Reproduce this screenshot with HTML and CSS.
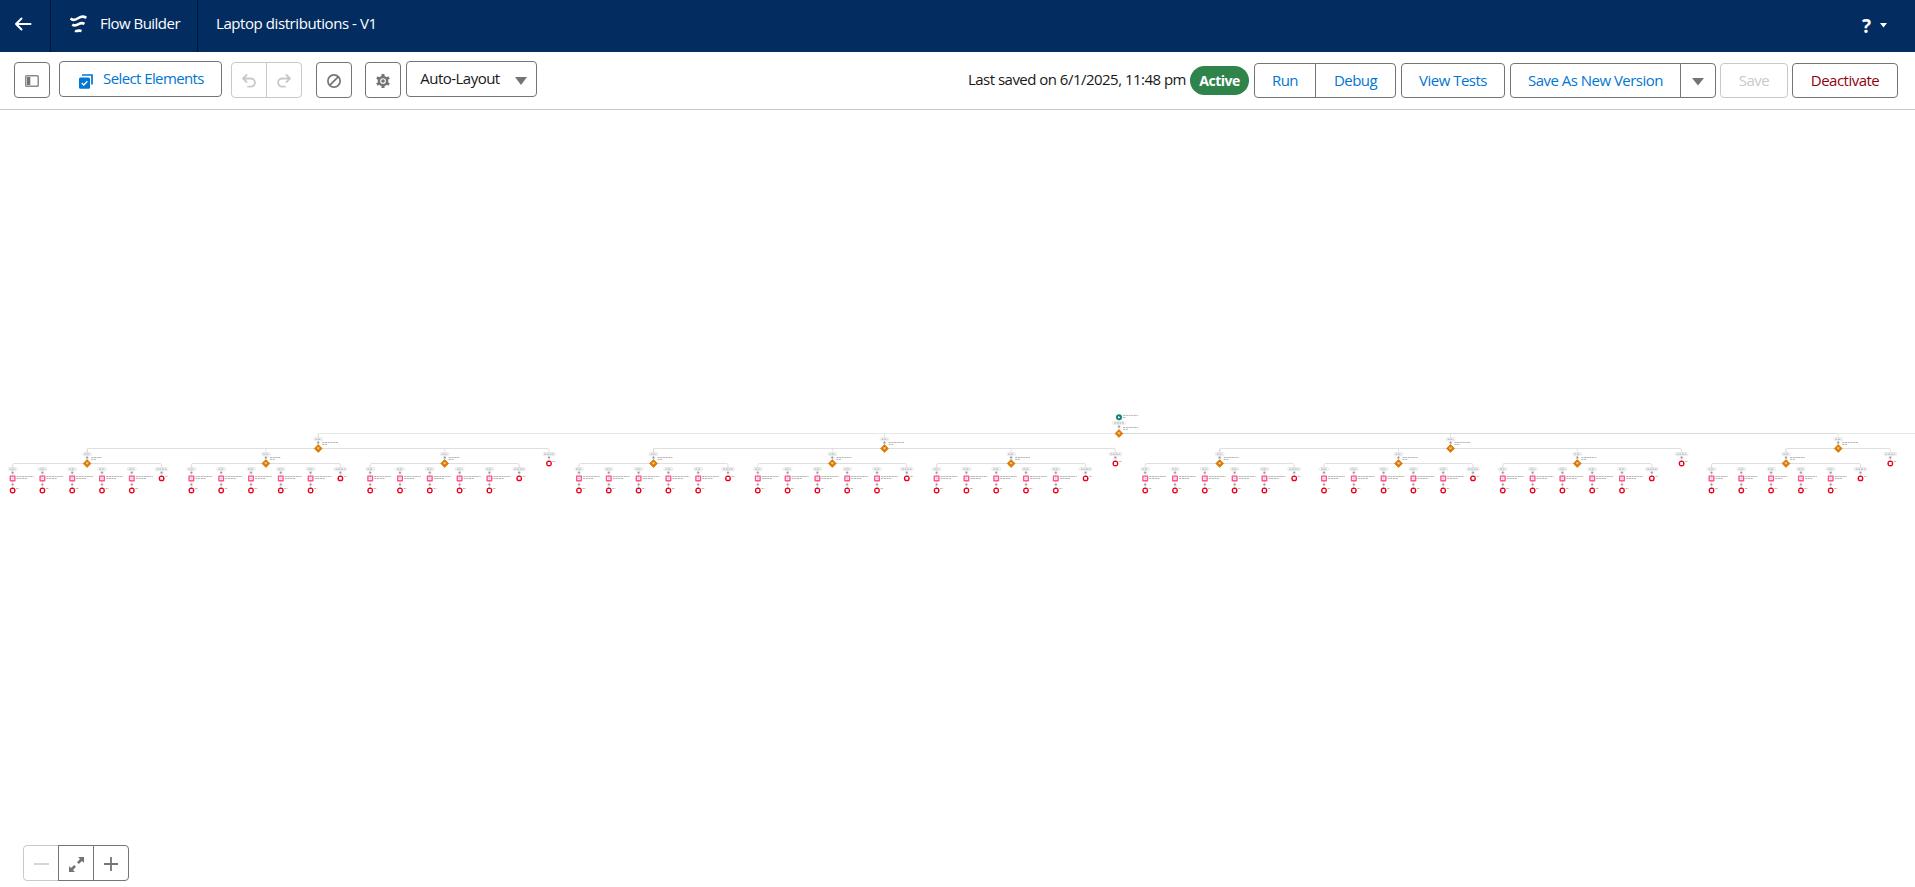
FILE: index.html
```html
<!DOCTYPE html>
<html lang="en">
<head>
<meta charset="utf-8">
<title>Flow Builder</title>
<link rel="stylesheet" href="styles.css">
</head>
<body>
<header class="topbar">
  <a class="back"><svg width="18" height="14" viewBox="0 0 18 14"><path d="M16.500 7H2M7.500 1.500L2 7l5.500 5.500" fill="none" stroke="#fff" stroke-width="2" stroke-linecap="round" stroke-linejoin="round"/></svg></a>
  <div class="brand">
    <svg width="17" height="18" viewBox="0 0 17 18"><g fill="none" stroke="#fff" stroke-width="2.600"><path d="M.5 3.500C3 6.200 5.500 5 8.500 3S13.500 1 16.300 2.800"/><path d="M2.300 9.500c2.500 2 4.500 .7 6.500-.5s3.700-1.300 5.700-.2"/><path d="M5 15.800c2 1 3-.9 6.500 .1"/></g></svg>
    <span>Flow Builder</span>
  </div>
  <h1 class="title">Laptop distributions - V1</h1>
  <div class="help"><b>?</b><svg width="7" height="5"><path d="M0 0h7L3.500 4.500z" fill="#fff"/></svg></div>
</header>
<div class="toolbar">
  <button class="btn icon toggle"><svg width="14" height="12" viewBox="0 0 14 12"><rect x=".75" y=".75" width="12.500" height="10.500" rx=".8" fill="none" stroke="#8c8c8c" stroke-width="1.500"/><path d="M2 2h3.300v8H2z" fill="#747474"/></svg></button>
  <button class="btn select"><svg width="14" height="15" viewBox="0 0 14 15"><path d="M3 1h10v9.500" fill="none" stroke="#0176d3" stroke-width="1.700"/><rect x="0" y="3.500" width="11" height="11.200" rx="1.500" fill="#0176d3"/><path d="M2.700 9l2 2 3.700-3.800" fill="none" stroke="#fff" stroke-width="1.300"/></svg><span>Select Elements</span></button>
  <div class="group undo">
    <button class="btn icon off"><svg width="14" height="14" viewBox="0 0 14 14"><path d="M4.500 1L1 4.500 4.500 8M1.500 4.500h7.300a4 4 0 0 1 0 8.200H6" fill="none" stroke="#c9c9c9" stroke-width="1.800" stroke-linecap="round"/></svg></button>
    <button class="btn icon off"><svg width="14" height="14" viewBox="0 0 14 14"><path d="M9.500 1L13 4.500 9.500 8M12.500 4.500H5.200a4 4 0 0 0 0 8.200H8" fill="none" stroke="#c9c9c9" stroke-width="1.800" stroke-linecap="round"/></svg></button>
  </div>
  <button class="btn icon ban"><svg width="14" height="14" viewBox="0 0 14 14"><g fill="none" stroke="#747474" stroke-width="1.700"><circle cx="7" cy="7" r="6.100"/><path d="M2.900 11.100l8.200-8.200"/></g></svg></button>
  <button class="btn icon gear"><svg width="14" height="14" viewBox="0 0 14 14"><g fill="none" stroke="#747474"><circle cx="7" cy="7" r="4.100" stroke-width="2.500"/><path d="M7 0v3M7 11v3M.9 3.500l2.700 1.500M10.400 9l2.700 1.500M.9 10.500L3.600 9M10.400 5l2.700-1.500" stroke-width="3"/></g><circle cx="7" cy="7" r="1.800" fill="#747474"/></svg></button>
  <button class="btn layout"><span>Auto-Layout</span><svg width="12" height="8"><path d="M0 0h12L6 8z" fill="#747474"/></svg></button>
  <span class="saved">Last saved on 6/1/2025, 11:48 pm</span>
  <span class="badge">Active</span>
  <div class="group run"><button class="btn w62">Run</button><button class="btn w81">Debug</button></div>
  <button class="btn tests">View Tests</button>
  <div class="group version"><button class="btn w171">Save As New Version</button><button class="btn w36"><svg width="12" height="8"><path d="M0 0h12L6 7.500z" fill="#747474"/></svg></button></div>
  <button class="btn save off">Save</button>
  <button class="btn deact">Deactivate</button>
</div>
<main class="canvas">
  <svg id="flow" class="flow" width="1915" height="777" viewBox="0 110 1915 777"></svg>
  <div class="group zoom">
    <button class="btn off"><svg width="15" height="14"><path d="M0 7h15" stroke="#c9c9c9" stroke-width="1.500"/></svg></button>
    <button class="btn"><svg width="15" height="15" viewBox="0 0 15 15"><path d="M9 0h6v6l-2-2-3.200 3-1.800-1.800L11 2zM6 15H0V9l2 2 3.200-3L7 9.800 4 13z" fill="#747474"/></svg></button>
    <button class="btn"><svg width="14" height="14"><path d="M0 7h14M7 0v14" stroke="#747474" stroke-width="1.800"/></svg></button>
  </div>
</main>
<script src="flow.js"></script>
</body>
</html>
```
FILE: styles.css
```css
* { box-sizing: border-box; }
body { margin: 0; width: 1915px; height: 887px; overflow: hidden; display: flex; flex-direction: column; background: #fff; color: #181818; font-family: "Open Sans", "Noto Sans", sans-serif; font-size: 15px; letter-spacing: -0.52px; }
button { font: inherit; letter-spacing: inherit; }
svg { display: block; flex: none; }
.topbar { height: 52px; flex: none; display: flex; background: #032d60; color: #fff; }
.back { flex: none; width: 51px; padding: 17px 0 0 14px; border-right: 1px solid #001639; }
.brand { flex: none; width: 147px; display: flex; gap: 13px; padding: 15px 0 0 19px; border-right: 1px solid #001639; line-height: 18px; }
.brand span { margin-top: -1px; }
.title { margin: 0; padding: 14px 0 0 18px; font-size: 15px; font-weight: 400; line-height: 18px; letter-spacing: -0.42px; }
.help { margin-left: auto; width: 53px; display: flex; gap: 9px; padding-top: 15px; font-size: 19px; line-height: 22px; }
.help svg { margin-top: 8px; }
.toolbar { height: 58px; flex: none; display: flex; align-items: flex-start; padding: 10px 0 0 14px; border-bottom: 1px solid #c9c9c9; }
.btn { height: 35px; padding: 0; display: flex; align-items: center; justify-content: center; background: #fff; border: 1px solid #747474; border-radius: 4px; color: #0176d3; white-space: nowrap; flex: none; }
.off { border-color: #c9c9c9; color: #c9c9c9; }
.group { display: flex; flex: none; }
.group .btn + .btn { margin-left: -1px; border-top-left-radius: 0; border-bottom-left-radius: 0; }
.group .btn:not(:last-child) { border-top-right-radius: 0; border-bottom-right-radius: 0; }
.toolbar .icon { width: 36px; height: 36px; padding-top: 2px; }
.select { width: 163px; height: 36px; margin: -1px 0 0 9px; gap: 10px; padding: 0 0 2px 2px; letter-spacing: -0.6px; }
.select svg { margin-top: 6px; }
.undo { width: 71px; margin-left: 9px; }
.ban { margin-left: 14px; }
.gear { margin-left: 13px; }
.layout { width: 131px; height: 36px; margin: -1px 0 0 5px; gap: 15px; padding: 0 0 2px 4px; color: #181818; }
.layout svg { margin-top: 6px; }
.saved { flex: none; width: 217px; margin: 7px 0 0 431px; line-height: 20px; white-space: nowrap; }
.badge { flex: none; width: 59px; height: 29px; margin: 4px 5px 0; border-radius: 15px; background: #2e844a; color: #fff; font-weight: 700; font-size: 14px; line-height: 29px; text-align: center; }
.run, .tests, .version, .save, .deact { margin-top: 1px; }
.toolbar .run .btn, .tests, .version .btn, .save, .deact { padding-bottom: 1px; }
.version svg { margin-top: 3px; }
.w62 { width: 62px; }
.w81 { width: 81px; }
.tests { width: 104px; margin-left: 5px; }
.version { margin-left: 5px; }
.w171 { width: 171px; }
.w36 { width: 36px; }
.save { width: 68px; margin-left: 4px; }
.deact { width: 106px; margin-left: 4px; color: #8e030f; }
.canvas { position: relative; flex: 1; }
.zoom { position: absolute; left: 23px; top: 735px; }
.zoom .btn { width: 36px; height: 36px; padding-top: 2px; }
```
FILE: flow.js
```js
const svg = document.getElementById('flow');
let lines = '', nodes = '';
const label = (x, y, w, c = '#888') => {
  nodes += `<path d="M${x} ${y}h${w}" stroke="${c}" stroke-width=".6" stroke-dasharray="2.200 .5"/>`;
};
const pill = (x, y, w) => {
  nodes += `<rect x="${x - w / 2}" y="${y - 1.6}" width="${w}" height="3.200" rx="1.600" fill="#fff" stroke="#c9c9c9" stroke-width=".4"/>`;
  label(x - w / 2 + 1.5, y, w - 3, '#666');
};
const plus = (x, y) => {
  nodes += `<circle cx="${x}" cy="${y}" r="1.600" fill="#d5dade"/><path d="M${x - .8} ${y}h1.600M${x} ${y - .8}v1.600" stroke="#747f8a" stroke-width=".6"/>`;
};
const end = (x, y) => {
  nodes += `<circle cx="${x}" cy="${y}" r="2.900" fill="#ea001e"/><rect x="${x - 1.4}" y="${y - 1.4}" width="2.800" height="2.800" rx=".5" fill="#fff"/>`;
  label(x + 3.5, y - 2, 3);
};
const decision = (x, y, w) => {
  nodes += `<path d="M${x} ${y - 3.9}l3.900 3.900-3.900 3.900-3.900-3.900z" fill="#dd7a01" stroke="#dd7a01" stroke-width=".8" stroke-linejoin="round"/><path d="M${x - 1.2} ${y - .8}h2.400l-1.200 1.600z" fill="#fff3e0" stroke="#f5c68a" stroke-width=".6"/>`;
  label(x + 4, y - 6, w); label(x + 4, y - 4.1, 5);
};
const action = (x, y, w) => {
  nodes += `<rect x="${x - 3}" y="${y - 3}" width="6" height="6" rx=".6" fill="#ff538a"/><rect x="${x - 1.2}" y="${y - 1.2}" width="2.400" height="2.400" fill="#ffb5cf" stroke="#fff" stroke-width=".8"/>`;
  label(x + 4, y - 1.9, w); label(x + 4, y + .1, w * .62);
};
const rail = (a, b, y) => {
  lines += `<path d="M${a} ${y + 5}v-3.500q0-1.500 1.500-1.500H${b - 1.5}q1.500 0 1.500 1.500v3.500" fill="none" stroke="#c9c9c9" stroke-width=".6"/>`;
};
const drop = (x, a, b) => { lines += `<path d="M${x} ${a}V${b}" stroke="#c9c9c9" stroke-width=".5"/>`; };

drop(1119, 417, 433);
nodes += `<circle cx="1119" cy="417.300" r="3" fill="#0b827c"/><path d="M1118.200 415.900l2.200 1.400-2.200 1.400z" fill="#fff"/>`;
label(1123, 415.4, 15); label(1123, 417.5, 3);
pill(1119, 423, 13); plus(1119, 426.6); decision(1119, 433.5, 15);
lines += '<path d="M318.200 438v-3q0-1.500 1.500-1.500H1915" fill="none" stroke="#dedede" stroke-width=".7"/><path d="M1119 433.500H1838" stroke="#d4d4d4" stroke-width=".7"/>';

[[318.2, 12.6, 3], [884.5, 579, 3], [1450.5, 1145.2, 3], [1838.2, 1711.5, 1]].forEach(([x, start, groups]) => {
  const last = start + groups * 178.8;
  drop(x, 433.5, 448);
  pill(x, 439.2, 9); plus(x, 442.6); decision(x, 448.5, 16);
  rail(start + 74.5, last, 448.5);
  drop(last, 452, 463);
  pill(last, 454.1, 13); plus(last, 457.5); end(last, 463.5);
  for (let g = 0; g < groups; g++) {
    const s = start + g * 178.8, d = s + 74.5;
    drop(d, 448.5, 463);
    pill(d, 454.1, 9); plus(d, 457.5); decision(d, 463.5, start > 500 ? 15 : 11);
    rail(s, s + 149, 463.5);
    for (let i = 0; i < 6; i++) {
      const c = s + i * 29.8;
      pill(c, 469.1, i === 5 ? 13 : 9); plus(c, 472.6);
      if (i === 5) { drop(c, 467, 478); end(c, 478.4); }
      else { drop(c, 467, 490); action(c, 478.4, start > 1700 ? 12 : 17); plus(c, 484.5); end(c, 490.5); }
    }
  }
});
svg.innerHTML = lines + nodes;
```
